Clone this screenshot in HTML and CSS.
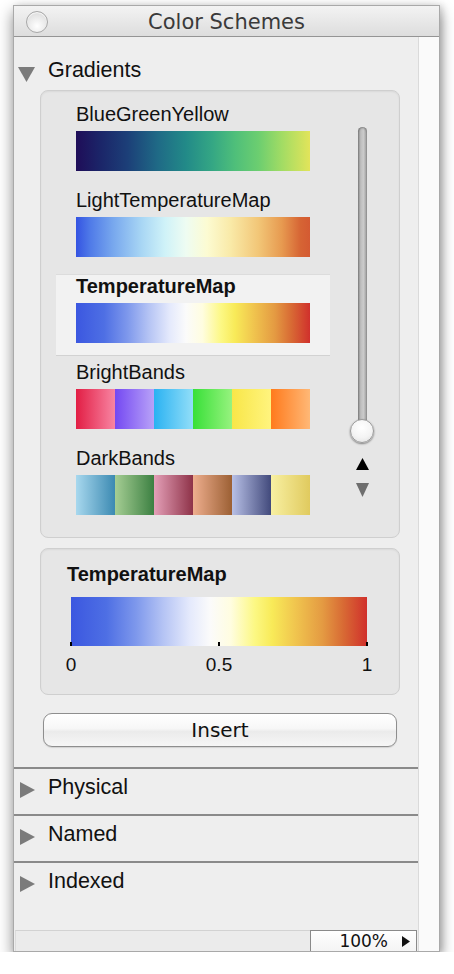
FILE: index.html
```html
<!DOCTYPE html>
<html>
<head>
<meta charset="utf-8">
<link rel="stylesheet" href="styles.css">
</head>
<body>
<div class="window">
  <div class="titlebar">
    <div class="tb-left"><span class="close"></span></div>
    <div class="title">Color Schemes</div>
    <div class="tb-right"></div>
  </div>
  <div class="body">
    <div class="main">
      <div class="head first">
        <svg class="tri-down" viewBox="0 0 17 15"><polygon points="0,0 17,0 8.5,15" fill="#7b7b7b"/></svg>
        <span>Gradients</span>
      </div>
      <div class="panel list-panel">
        <div class="list">
          <div class="item">
            <div class="name">BlueGreenYellow</div>
            <div class="bar g-bgy"></div>
          </div>
          <div class="item">
            <div class="name">LightTemperatureMap</div>
            <div class="bar g-ltm"></div>
          </div>
          <div class="item selected">
            <div class="name">TemperatureMap</div>
            <div class="bar g-tm"></div>
          </div>
          <div class="item">
            <div class="name">BrightBands</div>
            <div class="bar g-bright"></div>
          </div>
          <div class="item">
            <div class="name">DarkBands</div>
            <div class="bar g-dark"></div>
          </div>
        </div>
        <div class="slider">
          <div class="track"></div>
          <div class="thumb"></div>
          <svg class="arrow-up" viewBox="0 0 13 12"><polygon points="6.5,0 13,12 0,12" fill="#000"/></svg>
          <svg class="arrow-down" viewBox="0 0 13 14"><polygon points="0,0 13,0 6.5,14" fill="#6e6e6e"/></svg>
        </div>
      </div>
      <div class="panel preview">
        <div class="name">TemperatureMap</div>
        <div class="pbar g-tm">
          <span class="tick t0"></span>
          <span class="tick t5"></span>
          <span class="tick t1"></span>
        </div>
        <div class="labels"><span>0</span><span>0.5</span><span>1</span></div>
      </div>
      <button class="insert">Insert</button>
      <div class="head closed">
        <svg class="tri-right" viewBox="0 0 15 16"><polygon points="0,0 15,8 0,16" fill="#7b7b7b"/></svg>
        <span>Physical</span>
      </div>
      <div class="head closed">
        <svg class="tri-right" viewBox="0 0 15 16"><polygon points="0,0 15,8 0,16" fill="#7b7b7b"/></svg>
        <span>Named</span>
      </div>
      <div class="head closed">
        <svg class="tri-right" viewBox="0 0 15 16"><polygon points="0,0 15,8 0,16" fill="#7b7b7b"/></svg>
        <span>Indexed</span>
      </div>
      <div class="status">
        <div class="status-left"></div>
        <div class="zoom">
          <span class="zoom-text">100%</span>
          <svg class="zoom-arrow" viewBox="0 0 8 11"><polygon points="0,0 8,5.5 0,11" fill="#111"/></svg>
        </div>
      </div>
    </div>
    <div class="strip"></div>
  </div>
</div>
</body>
</html>
```
FILE: styles.css
```css
* { box-sizing: border-box; }

body {
  margin: 0;
  background: #ffffff;
  font-family: "Liberation Sans", Arial, sans-serif;
  color: #111;
}

.window {
  margin: 5px 0 0 13px;
  width: 427px;
  height: 947px;
  border: 1px solid #a9a9a9;
  background: #eeeeee;
  box-shadow: 0 7px 14px rgba(0, 0, 0, 0.45), 3px 0 6px rgba(0, 0, 0, 0.12);
  display: flex;
  flex-direction: column;
}

.titlebar {
  height: 31px;
  border-bottom: 1px solid #949494;
  background: linear-gradient(#f3f3f3, #dddddd);
  display: grid;
  grid-template-columns: 1fr auto 1fr;
  align-items: center;
}

.tb-left { display: flex; align-items: center; padding-left: 12px; padding-top: 1px; }

.close {
  width: 22px;
  height: 22px;
  border-radius: 50%;
  border: 1px solid #a8a8a8;
  background: radial-gradient(circle at 50% 70%, #ffffff, #e6e6e6 60%, #d4d4d4);
  box-shadow: inset 0 1px 1px rgba(255,255,255,0.9);
}

.title {
  font-family: "DejaVu Sans", sans-serif;
  font-size: 21px;
  line-height: 30px;
  color: #3a3a3a;
  padding-top: 1px;
}

.body {
  flex: 1;
  display: flex;
  min-height: 0;
}

.main {
  width: 404px;
  display: flex;
  flex-direction: column;
}

.strip {
  flex: 1;
  border-left: 1px solid #dadada;
  background: #fafafa;
}

/* section headers */
.head {
  display: flex;
  align-items: flex-start;
  font-size: 21.5px;
  line-height: 24px;
  color: #111;
}

.head.first {
  padding: 21px 0 0 4px;
}

.tri-down {
  width: 17px;
  height: 15px;
  margin-top: 9px;
  margin-right: 13px;
  flex: none;
}

.head.closed {
  border-top: 2px solid #8a8a8a;
  padding: 6px 0 15px 6px;
}

.tri-right {
  width: 15px;
  height: 16px;
  margin-top: 7px;
  margin-right: 13px;
  flex: none;
}

/* panels */
.panel {
  margin-left: 26px;
  width: 360px;
  border: 1px solid #cfcfcf;
  border-radius: 8px;
  background: #e6e6e6;
  box-shadow: inset 0 1px 2px rgba(0,0,0,0.06);
}

.list-panel {
  margin-top: 8px;
  height: 448px;
  padding-top: 11px;
  display: flex;
  align-items: flex-start;
}

.list {
  margin-left: 15px;
  width: 274px;
}

.item {
  border-top: 1px solid transparent;
  border-bottom: 1px solid transparent;
  padding: 0 20px 12px;
  margin-bottom: 4px;
}

.item.selected {
  background: #f2f2f2;
  border-top-color: #dcdcdc;
  border-bottom-color: #d2d2d2;
}

.name {
  font-size: 20px;
  line-height: 22px;
  color: #111;
  height: 22px;
  white-space: nowrap;
}

.selected .name,
.preview .name {
  font-weight: bold;
}

.bar {
  margin-top: 6px;
  height: 40px;
  width: 234px;
}

.g-bgy {
  background: linear-gradient(to right,
    #1f0d58 0%, #1b2468 10%, #1c3f78 22%, #1f6a86 35%, #228a88 47%,
    #34a684 58%, #4fbf7a 68%, #6cce70 78%, #a2dc64 88%, #e2e45a 100%);
}

.g-ltm {
  background: linear-gradient(to right,
    #3453e2 0%, #4f7ae8 6%, #78a8ee 16%, #a8d6f4 28%, #cff2f8 38%,
    #eefcf2 47%, #fcfbd2 56%, #f9eaa8 66%, #f2c677 78%, #e79a50 88%, #d66434 96%, #d45a32 100%);
}

.g-tm {
  background: linear-gradient(to right,
    #3b57e0 0%, #4e6fe4 12%, #7e98ec 22%, #b4c3f4 31%, #e4e9fc 40%,
    #fbfbfb 47%, #fffde0 54%, #fcf884 62%, #f8ea58 68%, #f0c44e 76%,
    #e49a42 85%, #d86a34 92%, #d0302c 100%);
}

.g-bright {
  background: linear-gradient(to right,
    #e21e44 0%, #f884a2 16.6%,
    #7448f2 16.6%, #b8a2f8 33.3%,
    #2ab2f2 33.3%, #92def8 50%,
    #38e038 50%, #96f27e 66.6%,
    #f8e648 66.6%, #fff47e 83.3%,
    #ff7a1c 83.3%, #ffb876 100%);
}

.g-dark {
  background: linear-gradient(to right,
    #a8d8ee 0%, #3c8ab2 16.6%,
    #a6ce94 16.6%, #3c8042 33.3%,
    #e4a0b8 33.3%, #8e3248 50%,
    #eeae8e 50%, #9c6034 66.6%,
    #b8c0e6 66.6%, #424a7c 83.3%,
    #f8f0a2 83.3%, #e0ca5e 100%);
}

/* slider */
.slider {
  margin-left: 20px;
  width: 24px;
  padding-top: 25px;
  display: flex;
  flex-direction: column;
  align-items: center;
}

.track {
  width: 9px;
  height: 304px;
  border-radius: 5px;
  background: linear-gradient(to right, #8a8a8a, #bdbdbd 30%, #cbcbcb 60%, #9c9c9c);
  box-shadow: inset 0 1px 2px rgba(0,0,0,0.35);
}

.thumb {
  width: 24px;
  height: 24px;
  margin-top: -12px;
  border-radius: 50%;
  border: 1px solid #9a9a9a;
  background: radial-gradient(circle at 50% 35%, #ffffff, #f4f4f4 55%, #dedede);
  box-shadow: 0 1px 2px rgba(0,0,0,0.45);
}

.arrow-up {
  width: 13px;
  height: 12px;
  margin-top: 15px;
}

.arrow-down {
  width: 13px;
  height: 14px;
  margin-top: 13px;
}

/* preview */
.preview {
  margin-top: 10px;
  height: 147px;
  padding: 14px 0 0 26px;
}

.pbar {
  position: relative;
  margin-top: 12px;
  margin-left: 4px;
  width: 296px;
  height: 49px;
}

.tick {
  position: absolute;
  bottom: 0;
  width: 2px;
  height: 4px;
  background: #000;
}

.t0 { left: -1px; }
.t5 { left: 147px; }
.t1 { right: -1px; }

.labels {
  margin-top: 8px;
  margin-left: -1.3px;
  width: 306.6px;
  display: flex;
  justify-content: space-between;
  font-size: 19px;
  line-height: 22px;
  color: #111;
}

/* insert button */
.insert {
  margin: 18px 0 20px 29px;
  width: 354px;
  height: 34px;
  border: 1px solid #8e8e8e;
  border-radius: 9px;
  background: linear-gradient(#ffffff, #f7f7f7 45%, #ebebeb 55%, #f6f6f6);
  box-shadow: 0 1px 1px rgba(0,0,0,0.12);
  font-family: "DejaVu Sans", sans-serif;
  font-size: 20px;
  line-height: 30px;
  color: #111;
  padding: 0;
}

/* status bar */
.status {
  margin-top: auto;
  height: 21px;
  display: flex;
}

.status-left {
  flex: 1;
  background: #ebebeb;
  border-top: 1px solid #d2d2d2;
  border-left: 1px solid #dcdcdc;
  margin-left: 1px;
}

.zoom {
  width: 107px;
  margin-right: 1px;
  border: 1px solid #8a8a8a;
  border-bottom: none;
  background: linear-gradient(#ffffff, #f4f4f4);
  display: flex;
  align-items: center;
  justify-content: flex-end;
  padding-right: 6px;
}

.zoom-text {
  font-family: "DejaVu Sans", sans-serif;
  font-size: 17px;
  line-height: 20px;
  color: #111;
  margin-right: 14px;
}

.zoom-arrow {
  width: 8px;
  height: 11px;
}
```
